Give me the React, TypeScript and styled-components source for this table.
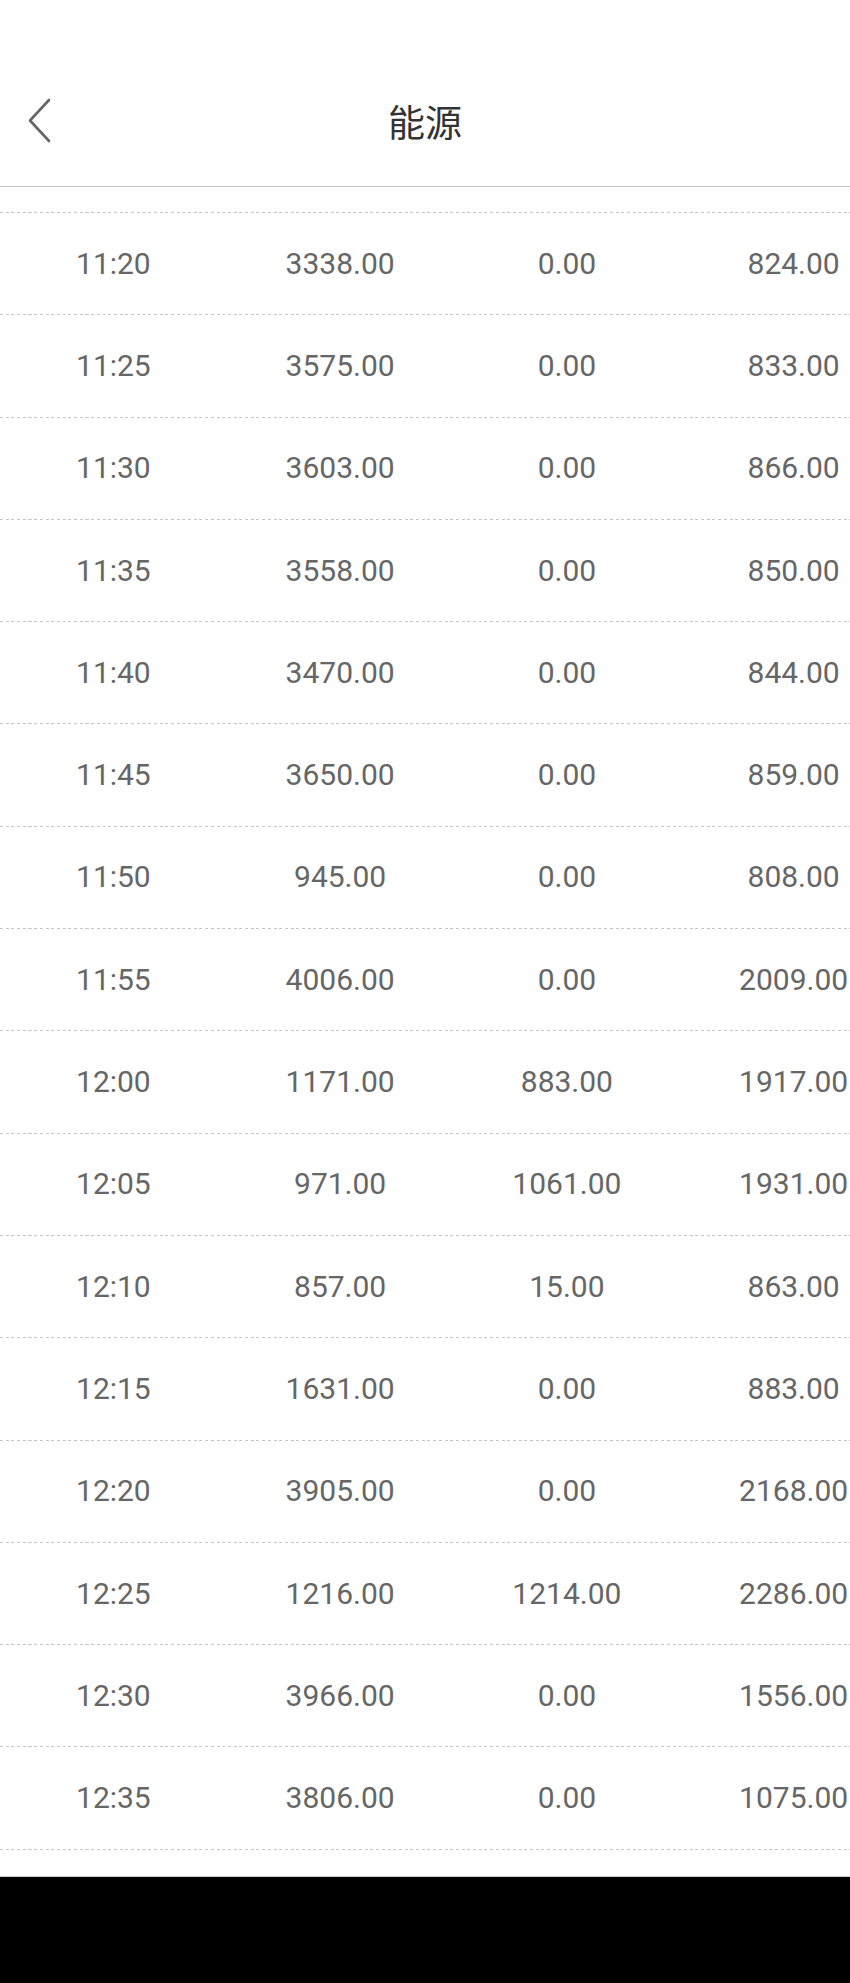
import * as React from 'react'
import styled, { createGlobalStyle } from 'styled-components'

const GlobalStyle = createGlobalStyle`
  html, body {
    margin: 0;
    padding: 0;
    background: #fff;
  }
`

const Screen = styled.div`
  width: 850px;
  height: 1983px;
  display: flex;
  flex-direction: column;
  overflow: hidden;
  background: #fff;
  font-family: Roboto, 'Noto Sans CJK SC', sans-serif;
`

const StatusBar = styled.div`
  height: 56px;
  flex-shrink: 0;
`

const Header = styled.header`
  height: 130px;
  flex-shrink: 0;
  display: grid;
  grid-template-columns: 1fr auto 1fr;
  align-items: center;
  border-bottom: 1px solid #c4c4c4;
`

const BackButton = styled.button`
  justify-self: start;
  display: flex;
  align-items: center;
  margin: 0 0 0 28px;
  padding: 0;
  border: none;
  background: none;
  height: 46px;
  cursor: pointer;
`

const Title = styled.h1`
  margin: 0;
  font-family: 'Noto Sans CJK SC', sans-serif;
  font-weight: 400;
  font-size: 37px;
  color: #333;
  letter-spacing: 0;
`

const TableBody = styled.div`
  flex: 1;
  overflow: hidden;
  padding-top: 25px;
`

const Row = styled.div<{ $last?: boolean }>`
  width: 907px;
  height: 102.3px;
  display: grid;
  grid-template-columns: repeat(4, 1fr);
  align-items: center;
  background-image: repeating-linear-gradient(to right, #c6c6c6 0 3px, transparent 3px 5.7px)
    ${p => (p.$last ? ', repeating-linear-gradient(to right, #c6c6c6 0 3px, transparent 3px 5.7px)' : '')};
  background-size: 100% 1px ${p => (p.$last ? ', 100% 1px' : '')};
  background-position: top left ${p => (p.$last ? ', bottom left' : '')};
  background-repeat: no-repeat;
  box-sizing: ${p => (p.$last ? 'content-box' : 'border-box')};
  padding-bottom: ${p => (p.$last ? '1px' : '0')};
`

const Cell = styled.span`
  text-align: center;
  font-size: 30px;
  color: #666;
  white-space: nowrap;
`

const NavBar = styled.div`
  height: 106px;
  flex-shrink: 0;
  background: #000;
  border-top: 1px solid #cfcfcf;
`

const rows: [string, string, string, string][] = [
  ['11:20', '3338.00', '0.00', '824.00'],
  ['11:25', '3575.00', '0.00', '833.00'],
  ['11:30', '3603.00', '0.00', '866.00'],
  ['11:35', '3558.00', '0.00', '850.00'],
  ['11:40', '3470.00', '0.00', '844.00'],
  ['11:45', '3650.00', '0.00', '859.00'],
  ['11:50', '945.00', '0.00', '808.00'],
  ['11:55', '4006.00', '0.00', '2009.00'],
  ['12:00', '1171.00', '883.00', '1917.00'],
  ['12:05', '971.00', '1061.00', '1931.00'],
  ['12:10', '857.00', '15.00', '863.00'],
  ['12:15', '1631.00', '0.00', '883.00'],
  ['12:20', '3905.00', '0.00', '2168.00'],
  ['12:25', '1216.00', '1214.00', '2286.00'],
  ['12:30', '3966.00', '0.00', '1556.00'],
  ['12:35', '3806.00', '0.00', '1075.00'],
]

const ChevronLeft = () => (
  <svg width="24" height="46" viewBox="0 0 24 46">
    <polyline points="21,2 2,22.5 21,43" fill="none" stroke="#666" strokeWidth="2.6" strokeLinecap="round" strokeLinejoin="round" />
  </svg>
)

export default function App() {
  return (
    <>
      <GlobalStyle />
      <Screen>
        <StatusBar />
        <Header>
          <BackButton aria-label="back">
            <ChevronLeft />
          </BackButton>
          <Title>能源</Title>
          <div />
        </Header>
        <TableBody>
          {rows.map((r, i) => (
            <Row key={r[0]} $last={i === rows.length - 1}>
              {r.map((v, j) => (
                <Cell key={j}>{v}</Cell>
              ))}
            </Row>
          ))}
        </TableBody>
        <NavBar />
      </Screen>
    </>
  )
}
